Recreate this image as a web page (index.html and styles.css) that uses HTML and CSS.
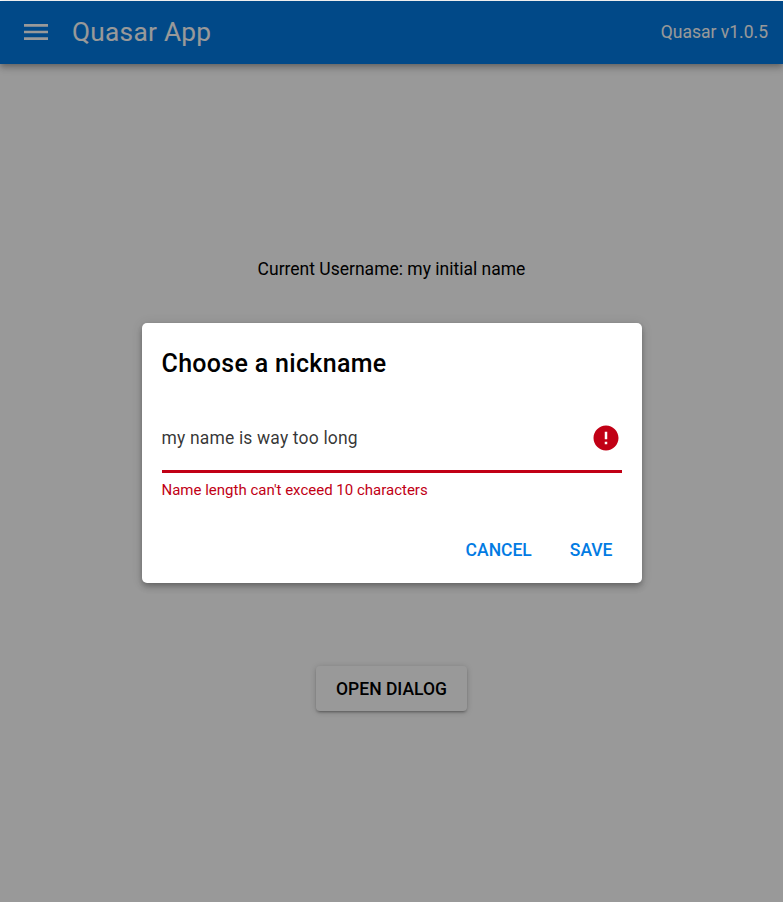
FILE: index.html
```html
<!DOCTYPE html>
<html lang="en">
<head>
<meta charset="utf-8">
<title>Quasar App</title>
<link rel="stylesheet" href="styles.css">
</head>
<body>
<div class="app">
  <header class="toolbar">
    <svg class="menu-icon" viewBox="0 0 24 16"><path d="M0 0h24v2.7H0zM0 6.65h24v2.7H0zM0 13.3h24V16H0z"/></svg>
    <div class="toolbar-title">Quasar App</div>
    <div class="version">Quasar v1.0.5</div>
  </header>
  <main class="page">
    <div class="username">Current Username: my initial name</div>
    <button class="open-button">OPEN DIALOG</button>
  </main>
  <div class="backdrop">
    <section class="dialog" role="dialog">
      <h1 class="dialog-title">Choose a nickname</h1>
      <div class="field">
        <span class="field-value">my name is way too long</span>
        <svg class="error-icon" viewBox="0 0 24 24"><path d="M12 2C6.48 2 2 6.48 2 12s4.48 10 10 10 10-4.48 10-10S17.52 2 12 2zm1 15h-2v-2h2v2zm0-4h-2V7h2v6z"/></svg>
      </div>
      <div class="field-error">Name length can't exceed 10 characters</div>
      <div class="actions">
        <button class="action">CANCEL</button>
        <button class="action">SAVE</button>
      </div>
    </section>
  </div>
</div>
</body>
</html>
```
FILE: styles.css
```css
* { box-sizing: border-box; }
body {
  margin: 0;
  padding-top: 1px;
  background: #fff;
  font-family: Roboto, "Liberation Sans", sans-serif;
  font-size: 17.5px;
  color: #000;
  overflow: hidden;
}
button {
  font: inherit;
  font-weight: 500;
  border: 0;
  background: none;
  white-space: nowrap;
}
.app {
  position: relative;
  display: flex;
  flex-direction: column;
  height: 901px;
  background: #fff;
}
.toolbar {
  display: flex;
  align-items: center;
  flex: none;
  height: 63px;
  padding: 0 15px 1px 24px;
  background: #027be3;
  color: #fff;
  box-shadow: 0 2px 5px -1px rgba(0,0,0,.2), 0 5px 6px rgba(0,0,0,.14), 0 1px 12px rgba(0,0,0,.12);
}
.menu-icon {
  flex: none;
  width: 24px;
  height: 16px;
  fill: currentColor;
}
.toolbar-title {
  flex: 1;
  padding-left: 24px;
  font-size: 26.25px;
  line-height: 32px;
  letter-spacing: .01em;
}
.version {
  line-height: 20px;
}
.page {
  display: flex;
  flex-direction: column;
  align-items: center;
}
.username {
  margin-top: 192px;
  line-height: 26px;
}
.open-button {
  width: 151px;
  height: 45px;
  margin-top: 384px;
  padding: 0;
  border-radius: 4px;
  box-shadow: 0 1px 6px rgba(0,0,0,.2), 0 2px 2px rgba(0,0,0,.14), 0 3px 1px -2px rgba(0,0,0,.12);
}
.backdrop {
  position: absolute;
  inset: 0;
  display: flex;
  align-items: flex-start;
  justify-content: center;
  padding: 322px 0 0 0;
  background: rgba(0,0,0,.4);
}
.dialog {
  width: 500px;
  height: 260px;
  padding: 21px 20px 20px;
  border-radius: 5px;
  background: #fff;
  box-shadow: 0 2px 5px -1px rgba(0,0,0,.2), 0 5px 6px rgba(0,0,0,.14), 0 1px 12px rgba(0,0,0,.12);
}
.dialog-title {
  margin: 0;
  font-size: 25px;
  font-weight: 500;
  line-height: 40px;
  letter-spacing: .0125em;
}
.field {
  display: flex;
  align-items: center;
  justify-content: space-between;
  height: 69px;
  padding: 1px 1px 0 0;
  margin-top: 20px;
  border-bottom: 3px solid #c10015;
}
.field-value {
  color: rgba(0,0,0,.8);
  letter-spacing: .00937em;
}
.error-icon {
  width: 30px;
  height: 30px;
  fill: #c10015;
}
.field-error {
  margin-top: 7px;
  font-size: 15px;
  line-height: 20px;
  color: #c10015;
}
.actions {
  display: flex;
  justify-content: flex-end;
  gap: 18px;
  margin: 27px -1px 0 0;
}
.action {
  height: 45px;
  padding: 0 10px;
  color: #027be3;
}
```
